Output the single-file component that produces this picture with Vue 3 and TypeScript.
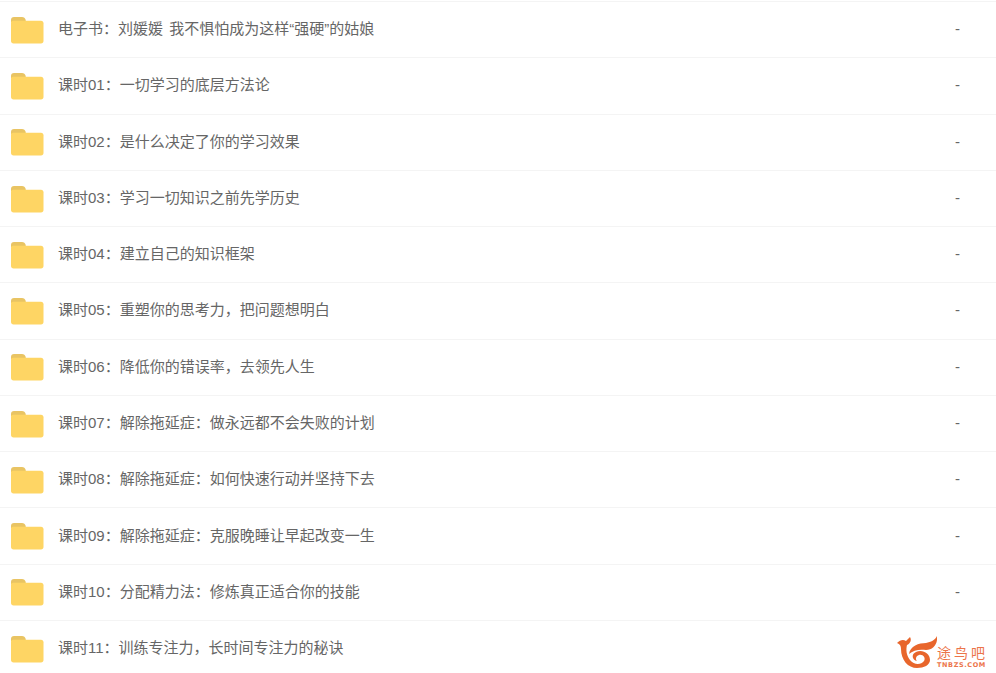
<script setup lang="ts">
interface Row {
  name: string
  size: string
}
const rows: Row[] = [
  { name: '电子书：刘媛媛 我不惧怕成为这样“强硬”的姑娘', size: '-' },
  { name: '课时01：一切学习的底层方法论', size: '-' },
  { name: '课时02：是什么决定了你的学习效果', size: '-' },
  { name: '课时03：学习一切知识之前先学历史', size: '-' },
  { name: '课时04：建立自己的知识框架', size: '-' },
  { name: '课时05：重塑你的思考力，把问题想明白', size: '-' },
  { name: '课时06：降低你的错误率，去领先人生', size: '-' },
  { name: '课时07：解除拖延症：做永远都不会失败的计划', size: '-' },
  { name: '课时08：解除拖延症：如何快速行动并坚持下去', size: '-' },
  { name: '课时09：解除拖延症：克服晚睡让早起改变一生', size: '-' },
  { name: '课时10：分配精力法：修炼真正适合你的技能', size: '-' },
  { name: '课时11：训练专注力，长时间专注力的秘诀', size: '' },
]
</script>

<template>
  <div class="page">
    <div class="list">
      <div v-for="r in rows" :key="r.name" class="row">
        <svg class="folder" width="33" height="27" viewBox="0 0 33 27">
          <path d="M0 3C0 1 1 0 3 0H11C13 0 14 1 14.500 2.500L15 5H0Z" fill="#e9c463" />
          <path d="M0 5.500C0 4.500 1 3.800 2 3.800H30C31.500 3.800 32.500 4.800 32.500 6.300V24C32.500 25.500 31.500 26.500 30 26.500H2.500C1 26.500 0 25.500 0 24Z" fill="#fed564" />
        </svg>
        <span class="name">{{ r.name }}</span>
        <span class="size">{{ r.size }}</span>
      </div>
    </div>
    <div class="mark">
      <svg width="40" height="32" viewBox="0 0 40 32">
        <path d="M0 7C3 4 6 3 9 5L13 1C15 4 13 8 10 9C9 13 9 19 13 24C17 29 24 29 27 25C29 22 26 18 22 19C19 20 18 23 20 25C15 24 14 18 19 16C25 13 33 17 33 24C33 29 27 32 20 32C11 32 4 24 4 13C4 10 3 8 0 7Z" fill="#e8662c" />
        <path d="M12 18C13 10 22 7 29 7C34 6 38 4 40 0C41 8 36 14 29 14C23 13 16 14 12 18Z" fill="#e8662c" />
      </svg>
      <div class="mark-text">
        <span class="mark-cn">途鸟吧</span>
        <span class="mark-en">TNBZS.COM</span>
      </div>
    </div>
  </div>
</template>

<style scoped>
.page {
  position: relative;
  width: 996px;
  height: 673px;
  overflow: hidden;
  background: #fff;
  font-family: "Liberation Sans", "Noto Sans CJK SC", sans-serif;
}
.list {
  padding-top: 1px;
}
.row {
  box-sizing: border-box;
  height: 56.27px;
  display: flex;
  align-items: center;
  padding-left: 11px;
  border-top: 1px solid #f4f4f4;
}
.folder {
  flex: none;
  margin-top: 1.4px;
}
.name {
  margin-left: 14px;
  padding-bottom: 1px;
  flex: 1;
  font-size: 15px;
  line-height: 22px;
  word-spacing: 2px;
  color: #666;
  white-space: nowrap;
}
.size {
  width: 41px;
  flex: none;
  padding-bottom: 1px;
  font-size: 15px;
  line-height: 22px;
  color: #666;
}
.mark {
  position: absolute;
  left: 897px;
  top: 636px;
  display: flex;
  align-items: flex-end;
}
.mark-text {
  display: flex;
  flex-direction: column;
  width: 48px;
  margin-bottom: -1px;
}
.mark-cn {
  font-size: 14px;
  line-height: 15px;
  color: #ec744a;
  letter-spacing: 3px;
  white-space: nowrap;
}
.mark-en {
  font-family: "DejaVu Sans", sans-serif;
  font-size: 6.5px;
  line-height: 8px;
  font-weight: 700;
  color: #ec744a;
  letter-spacing: 0.6px;
  white-space: nowrap;
}
</style>
